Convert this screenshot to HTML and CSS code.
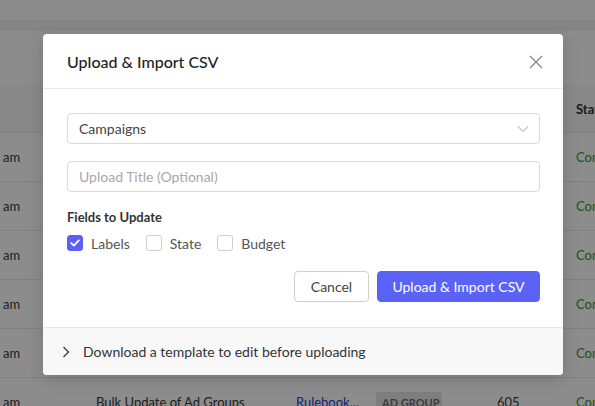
FILE: index.html
```html
<!DOCTYPE html>
<html>
<head>
<meta charset="utf-8">
<link rel="stylesheet" href="styles.css">
</head>
<body>
<div class="page">
  <div class="topbar"></div>
  <div class="band"></div>
  <div class="spacer"></div>
  <div class="table">
    <div class="row head">
      <div class="c c1"></div><div class="c"></div><div class="c"></div><div class="c"></div><div class="c"></div><div class="c">Status</div>
    </div>
    <div class="row"><div class="c c1">am</div><div class="c"></div><div class="c"></div><div class="c"></div><div class="c"></div><div class="c ok">Completed</div></div>
    <div class="row"><div class="c c1">am</div><div class="c"></div><div class="c"></div><div class="c"></div><div class="c"></div><div class="c ok">Completed</div></div>
    <div class="row"><div class="c c1">am</div><div class="c"></div><div class="c"></div><div class="c"></div><div class="c"></div><div class="c ok">Completed</div></div>
    <div class="row"><div class="c c1">am</div><div class="c"></div><div class="c"></div><div class="c"></div><div class="c"></div><div class="c ok">Completed</div></div>
    <div class="row"><div class="c c1">am</div><div class="c"></div><div class="c"></div><div class="c"></div><div class="c"></div><div class="c ok">Completed</div></div>
    <div class="row"><div class="c c1">am</div><div class="c">Bulk Update of Ad Groups</div><div class="c link">Rulebook...</div><div class="c"><span class="badge">AD GROUP</span></div><div class="c">605</div><div class="c ok">Completed</div></div>
  </div>
</div>
<div class="overlay"></div>
<div class="modal">
  <div class="m-head">
    <div class="m-title">Upload &amp; Import CSV</div>
    <svg class="close" width="14" height="14" viewBox="0 0 14 14"><path d="M1 1L13 13M13 1L1 13" stroke="#8a8a8a" stroke-width="1.4" fill="none"/></svg>
  </div>
  <div class="m-body">
    <div class="field select">
      <span>Campaigns</span>
      <svg width="12" height="8" viewBox="0 0 12 8"><path d="M1 1.5L6 6.5L11 1.5" stroke="#c4c4c4" stroke-width="1.1" fill="none"/></svg>
    </div>
    <div class="field input"><span class="ph">Upload Title (Optional)</span></div>
    <div class="fields-label">Fields to Update</div>
    <div class="checks">
      <label class="chk"><span class="box on"><svg width="10" height="8" viewBox="0 0 10 8"><path d="M1.2 4.2L3.8 6.6L8.8 1.4" stroke="#fff" stroke-width="1.8" fill="none" stroke-linecap="round" stroke-linejoin="round"/></svg></span>Labels</label>
      <label class="chk"><span class="box"></span>State</label>
      <label class="chk"><span class="box"></span>Budget</label>
    </div>
    <div class="actions">
      <button class="btn cancel">Cancel</button>
      <button class="btn primary">Upload &amp; Import CSV</button>
    </div>
  </div>
  <div class="m-foot">
    <svg width="8" height="12" viewBox="0 0 8 12"><path d="M1.5 1L6.5 6L1.5 11" stroke="#333" stroke-width="1.2" fill="none"/></svg>
    <span>Download a template to edit before uploading</span>
  </div>
</div>
</body>
</html>
```
FILE: styles.css
```css
* { box-sizing: border-box; }
html, body { margin: 0; padding: 0; }
body {
  width: 595px;
  height: 406px;
  overflow: hidden;
  font-family: Lato, "Liberation Sans", sans-serif;
  background: #fff;
  position: relative;
}
.page { width: 595px; height: 406px; overflow: hidden; }
.topbar { height: 20px; background: #fff; }
.band { height: 11px; background: #f2f2f2; }
.spacer { height: 54px; background: #fff; }
.row {
  display: grid;
  grid-template-columns: 96px 200px 80px 121px 79px 1fr;
  height: 49px;
  align-items: center;
  border-bottom: 1px solid #e8e8e8;
  font-size: 13px;
  color: #3a3a3a;
  white-space: nowrap;
}
.row.head { height: 48px; background: #f7f7f7; font-weight: 700; color: #333; }
.c { overflow: hidden; }
.c1 { padding-left: 3px; }
.link { color: #2f3fd0; }
.ok { color: #3c9a1c; }
.badge {
  display: inline-block;
  background: #e6e6e6;
  color: #6f6f6f;
  font-size: 11px;
  font-weight: 700;
  padding: 4px 6px;
  border-radius: 3px;
  width: 66px;
}
.overlay {
  position: absolute;
  inset: 0;
  background: rgba(0, 0, 0, 0.45);
}
.modal {
  position: absolute;
  left: 43px;
  top: 34px;
  width: 520px;
  background: #fff;
  border-radius: 4px;
  overflow: hidden;
  box-shadow: 0 4px 16px rgba(0,0,0,0.15);
}
.m-head {
  height: 55px;
  border-bottom: 1px solid #e8e8e8;
  display: flex;
  align-items: center;
  justify-content: space-between;
  padding: 0 20px 0 24px;
}
.m-title { font-size: 16px; font-weight: 500; color: #222; }
.close { margin-top: 1px; }
.m-body { padding: 24px 23px 25px 24px; }
.field {
  height: 31px;
  border: 1px solid #d9d9d9;
  border-radius: 4px;
  display: flex;
  align-items: center;
  justify-content: space-between;
  padding: 0 10px 0 11px;
  font-size: 14px;
  color: #444;
}
.select { margin-bottom: 17px; }
.ph { color: #a8a8a8; }
.fields-label { margin-top: 17px; font-size: 13px; font-weight: 700; color: #333; line-height: 16px; }
.checks { display: flex; gap: 16px; margin-top: 10px; height: 16px; align-items: center; }
.chk { display: flex; align-items: center; gap: 8px; font-size: 14px; color: #555; }
.box {
  width: 16px; height: 16px;
  border: 1px solid #cfcfcf;
  border-radius: 3px;
  display: flex; align-items: center; justify-content: center;
}
.box.on { background: #5a62f5; border-color: #5a62f5; }
.actions { display: flex; justify-content: flex-end; gap: 8px; margin-top: 20px; }
.btn {
  height: 31px;
  border-radius: 4px;
  font-family: Lato, "Liberation Sans", sans-serif;
  font-size: 14px;
  padding: 0;
}
.cancel { width: 75px; background: #fff; border: 1px solid #cfcfcf; color: #444; }
.primary { width: 163px; background: #5a63f6; border: 1px solid #5a63f6; color: #fff; }
.m-foot {
  height: 48px;
  background: #f8f8f8;
  border-top: 1px solid #e6e6e6;
  display: flex;
  align-items: center;
  padding-left: 19px;
  gap: 13px;
  font-size: 14px;
  color: #333;
}
```
